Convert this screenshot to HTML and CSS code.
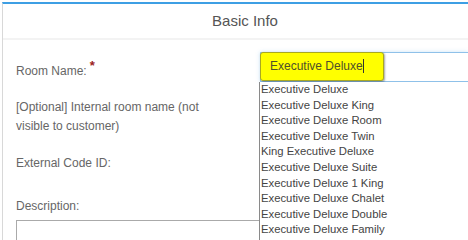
FILE: index.html
```html
<!DOCTYPE html>
<html lang="en">
<head>
    <meta charset="UTF-8">
    <meta name="viewport" content="width=device-width, initial-scale=1.0">
    <title>Basic Info</title>
    <link rel="stylesheet" href="styles.css">
</head>
<body>
    <div class="info-panel">
        <div class="panel-head">Basic Info</div>
        <div class="panel-body">
            <div class="form-row name-row">
                <label class="field-label">Room Name:<span class="required">*</span></label>
                <div class="field">
                    <div class="text-input"></div>
                    <!-- highlighted search term -->
                    <div class="highlight">Executive Deluxe<span class="caret"></span></div>
                    <ul class="suggestions">
                        <li>Executive Deluxe</li>
                        <li>Executive Deluxe King</li>
                        <li>Executive Deluxe Room</li>
                        <li>Executive Deluxe Twin</li>
                        <li>King Executive Deluxe</li>
                        <li>Executive Deluxe Suite</li>
                        <li>Executive Deluxe 1 King</li>
                        <li>Executive Deluxe Chalet</li>
                        <li>Executive Deluxe Double</li>
                        <li>Executive Deluxe Family</li>
                    </ul>
                </div>
            </div>
            <div class="form-row optional-row">
                <label class="field-label narrow">[Optional] Internal room name (not visible to customer)</label>
            </div>
            <div class="form-row code-row">
                <label class="field-label">External Code ID:</label>
            </div>
            <div class="form-row desc-row">
                <label class="field-label">Description:</label>
            </div>
            <div class="desc-box"></div>
        </div>
    </div>
</body>
</html>
```

FILE: styles.css
```css
body {
    margin: 0;
    font-family: "Liberation Sans", Arial, sans-serif;
    background-color: #fff;
    overflow: hidden;
}
.info-panel {
    margin: 2px 0 0 2px;
    height: 236px;
    overflow: hidden;
    border-top: 2px solid #3d9fe4;
    border-left: 1px solid #d8d8d8;
}
.panel-head {
    height: 34px;
    padding-left: 19px;
    line-height: 33px;
    text-align: center;
    font-size: 15px;
    color: #555;
    border-bottom: 2px solid #f3f3f3;
}
.panel-body {
    padding: 12px 0 0 13px;
}
.form-row {
    display: flex;
    align-items: center;
}
.field-label {
    width: 244px;
    flex-shrink: 0;
    font-size: 12px;
    line-height: 19px;
    color: #666;
}
.field-label.narrow {
    width: 200px;
}
.required {
    color: #9b2222;
    font-size: 13px;
    font-weight: bold;
    vertical-align: 5px;
    margin-left: 3px;
}
.name-row {
    height: 30px;
}
.name-row .field-label {
    align-self: flex-start;
    margin-top: 4px;
}
.field {
    position: relative;
    flex: 1;
    height: 30px;
}
.text-input {
    height: 28px;
    border: 1px solid #8fc1e9;
    border-right: none;
    box-shadow: 0 0 4px rgba(102, 175, 233, 0.35);
}
.highlight {
    position: absolute;
    top: 0;
    left: 0;
    width: 113px;
    height: 27px;
    padding-left: 9px;
    line-height: 27px;
    font-size: 12px;
    color: #4f4f2a;
    background-color: #ffff00;
    border: 1px solid #a8a820;
    border-radius: 3px;
    box-shadow: 1px 1px 2px rgba(0, 0, 0, 0.35);
}
.caret {
    display: inline-block;
    width: 1px;
    height: 14px;
    background-color: #333;
    vertical-align: -3px;
}
.suggestions {
    position: absolute;
    top: 30px;
    left: -1px;
    right: 0;
    height: 160px;
    margin: 0;
    padding: 0 0 0 1px;
    list-style: none;
    background-color: #fff;
    border-left: 1px solid #8a8a8a;
    z-index: 2;
}
.suggestions li {
    font-size: 11.3px;
    line-height: 15.6px;
    color: #444;
}
.optional-row {
    margin-top: 16px;
}
.code-row {
    margin-top: 18px;
}
.desc-row {
    margin-top: 24px;
}
.desc-box {
    margin-top: 4px;
    width: 400px;
    height: 40px;
    border: 1px solid #aaa;
}
```
